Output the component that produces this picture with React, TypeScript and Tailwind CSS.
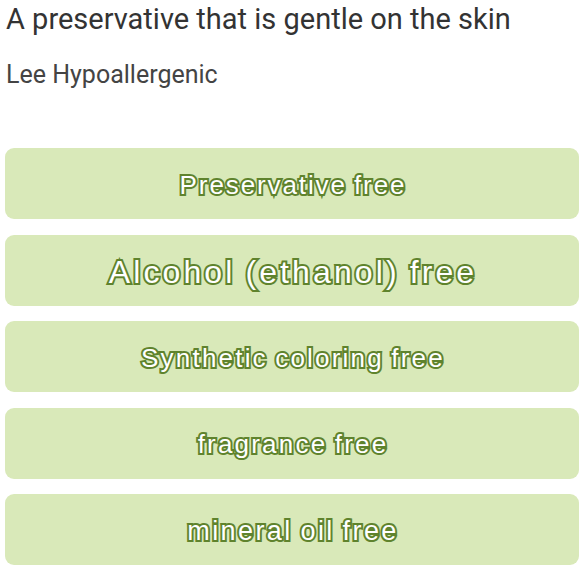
const ITEMS = [
  { label: "Preservative free", style: "text-[26px] tracking-[1.9px]" },
  { label: "Alcohol (ethanol) free", style: "text-[32px] tracking-[3.1px]" },
  { label: "Synthetic coloring free", style: "text-[26px] tracking-[2.2px]" },
  { label: "fragrance free", style: "text-[26px] tracking-[2.2px]" },
  { label: "mineral oil free", style: "text-[27px] tracking-[2.4px]" },
];

export default function App() {
  return (
    <div className="w-[585px] h-[569px] bg-white overflow-hidden">
      {/* Heading */}
      <div className="px-[6px] pt-[1px] font-['Roboto',sans-serif]">
        <h1 className="text-[29px] leading-[36px] text-[#333333]">
          A preservative that is gentle on the skin
        </h1>
        <p className="mt-[23px] text-[25px] leading-[30px] text-[#444444]">
          Lee Hypoallergenic
        </p>
      </div>

      {/* Feature list */}
      <div className="mt-[58px] pl-[5px] pr-[6px] flex flex-col gap-[15.5px] font-['Liberation_Sans',Arial,sans-serif]">
        {ITEMS.map((item) => (
          <div
            key={item.label}
            className="h-[71px] rounded-[9px] bg-[#d9e9b9] flex items-center justify-center"
          >
            <span
              className={`${item.style} mt-[3px] mr-[-2px] [word-spacing:-2px] text-white [-webkit-text-stroke:4px_#5f832d] [paint-order:stroke_fill]`}
            >
              {item.label}
            </span>
          </div>
        ))}
      </div>
    </div>
  );
}
